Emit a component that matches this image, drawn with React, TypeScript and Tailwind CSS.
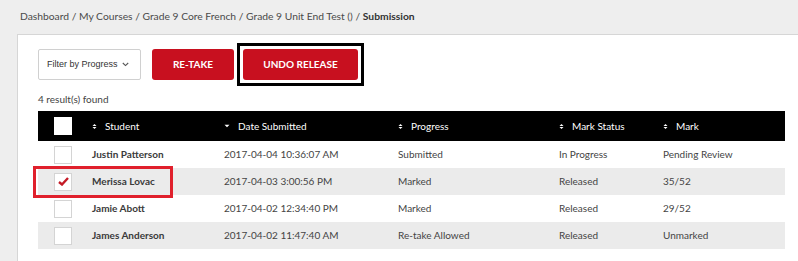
import type React from "react"

type Row = {
  name: string
  date: string
  progress: string
  status: string
  mark: string
  checked?: boolean
}

const rows: Row[] = [
  { name: "Justin Patterson", date: "2017-04-04 10:36:07 AM", progress: "Submitted", status: "In Progress", mark: "Pending Review" },
  { name: "Merissa Lovac", date: "2017-04-03 3:00:56 PM", progress: "Marked", status: "Released", mark: "35/52", checked: true },
  { name: "Jamie Abott", date: "2017-04-02 12:34:40 PM", progress: "Marked", status: "Released", mark: "29/52" },
  { name: "James Anderson", date: "2017-04-02 11:47:40 AM", progress: "Re-take Allowed", status: "Released", mark: "Unmarked" },
]

const grid = "grid grid-cols-[54px_132px_174px_161px_104px_1fr] items-center"

const SortIcon = ({ down }: { down?: boolean }) =>
  down ? (
    <svg width="6" height="6" viewBox="0 0 6 6" className="mr-[8px]">
      <path d="M0.5 1.8 L5.5 1.8 L3 4.3 Z" fill="#fff" />
    </svg>
  ) : (
    <svg width="5" height="7" viewBox="0 0 5 7" className="mr-[8px]">
      <path d="M0.5 3 L2.5 1 L4.5 3 Z M0.5 4 L4.5 4 L2.5 6 Z" fill="#fff" />
    </svg>
  )

const Checkbox = ({ checked, header }: { checked?: boolean; header?: boolean }) => (
  <div
    className={`ml-[16px] flex h-[18px] w-[18px] items-center justify-center bg-white ${
      header ? "" : "border border-[#d4d4d4]"
    }`}
  >
    {checked && (
      <svg width="11" height="9" viewBox="0 0 11 9">
        <path d="M1 5 L4 7.5 L10 1" stroke="#c41a26" strokeWidth="2.4" fill="none" />
      </svg>
    )}
  </div>
)

const HeadCell = ({ label, down }: { label: string; down?: boolean }) => (
  <div className="flex items-center">
    <SortIcon down={down} />
    <span>{label}</span>
  </div>
)

const App: React.FC = () => {
  return (
    <div className="flex h-[261px] w-full flex-col overflow-hidden bg-[#eeeeee] font-['Lato',sans-serif] text-[10px] text-[#444]">
      <div className="flex h-[34px] items-center whitespace-nowrap px-[20px] text-[10.3px] text-[#4a4a4a]">
        Dashboard / My Courses / Grade 9 Core French / Grade 9 Unit End Test () /&nbsp;
        <span className="font-bold text-[#333]">Submission</span>
      </div>
      <div className="ml-[17px] flex-1 border-l border-t border-[#d6d6d6] bg-white pl-[20px] pr-[13px] pt-[14px]">
        <div className="flex h-[31px] items-center">
          <div className="flex h-[31px] w-[103px] items-center justify-between whitespace-nowrap rounded-[2px] border border-[#d0d0d0] pl-[8px] pr-[11px] font-['Liberation_Sans',Arial,sans-serif] text-[9px] text-[#333]">
            <span>Filter by Progress</span>
            <svg width="7" height="5" viewBox="0 0 7 5">
              <path d="M0.8 1 L3.5 3.6 L6.2 1" stroke="#555" strokeWidth="1.1" fill="none" />
            </svg>
          </div>
          <button className="ml-[11px] h-[31px] w-[82px] rounded-[3px] bg-[#c8101f] text-[10px] font-bold text-white">
            RE-TAKE
          </button>
          <div className="-my-[6px] ml-[3px] border-[3px] border-black p-[3px]">
            <button className="block h-[31px] w-[115px] rounded-[3px] bg-[#c8101f] text-[10px] font-bold text-white">
              UNDO RELEASE
            </button>
          </div>
        </div>
        <div className="mt-[12px] h-[14px] leading-[14px] text-[#444]">4 result(s) found</div>
        <div className="mt-[5px] w-[747px]">
          <div className={`${grid} h-[30px] bg-black text-white`}>
            <Checkbox header />
            <HeadCell label="Student" />
            <HeadCell label="Date Submitted" down />
            <HeadCell label="Progress" />
            <HeadCell label="Mark Status" />
            <HeadCell label="Mark" />
          </div>
          {rows.map((r, i) => (
            <div
              key={r.name}
              className={`${grid} relative h-[27px] ${i % 2 === 1 ? "bg-[#ebebeb]" : "bg-white"}`}
            >
              <Checkbox checked={r.checked} />
              <div className="font-bold text-[#3a3a3a]">{r.name}</div>
              <div>{r.date}</div>
              <div>{r.progress}</div>
              <div>{r.status}</div>
              <div>{r.mark}</div>
              {r.checked && (
                <div className="absolute left-[-5px] top-[-2px] z-10 h-[32px] w-[140px] border-[3px] border-[#e0202c]" />
              )}
            </div>
          ))}
        </div>
      </div>
    </div>
  )
}

export default App
